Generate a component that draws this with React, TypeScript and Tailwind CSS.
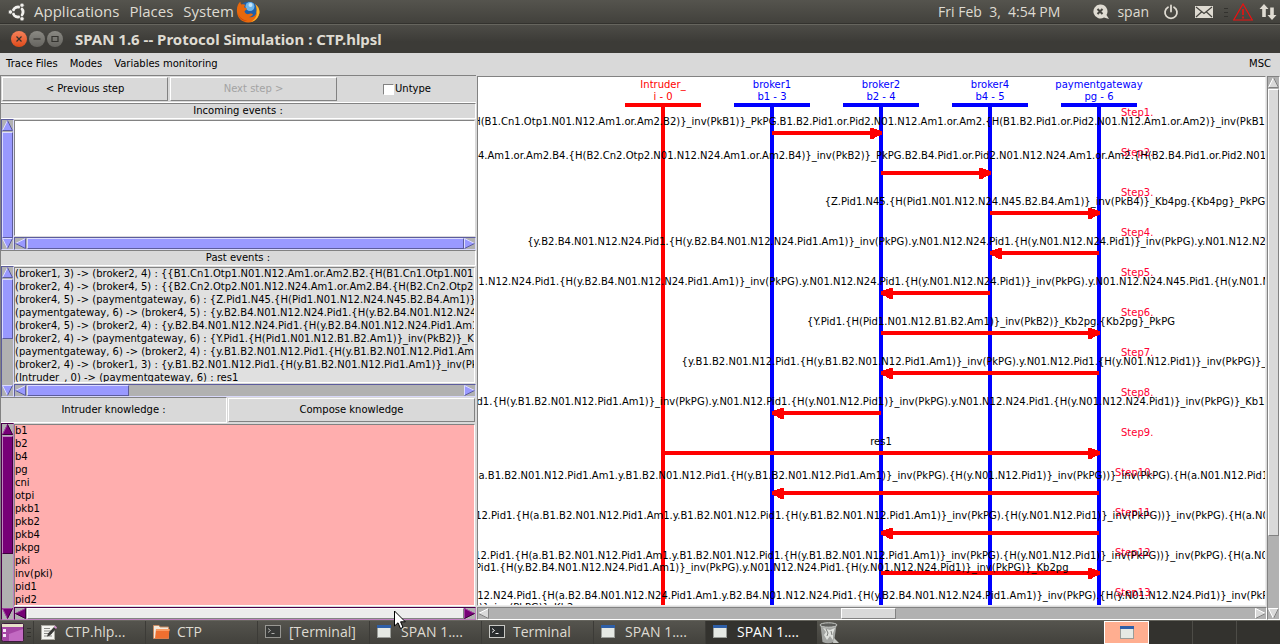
import type { ReactNode } from "react";

/* ---------- scrollbars and frames ---------- */

type Tone = {
  frame: string;
  thumb: string;
  fill: string;
  light: string;
  dark: string;
};

const violet: Tone = {
  frame: "border-t-[#5c5c9c] border-l-[#5c5c9c] border-b-[#d8d8fa] border-r-[#d8d8fa]",
  thumb: "bg-[#9999ff] border-t-[#dcdcff] border-l-[#dcdcff] border-b-[#5c5c9c] border-r-[#5c5c9c]",
  fill: "#9999ff",
  light: "#dcdcff",
  dark: "#5c5c9c",
};

const purple: Tone = {
  frame: "border-t-[#4a004a] border-l-[#4a004a] border-b-[#c080c0] border-r-[#c080c0]",
  thumb: "bg-[#770077] border-t-[#c080c0] border-l-[#c080c0] border-b-[#3c003c] border-r-[#3c003c]",
  fill: "#770077",
  light: "#a040a0",
  dark: "#3c003c",
};

const purpleIdle: Tone = {
  ...purple,
  thumb: "bg-[#ececec] border-t-white border-l-white border-b-[#828282] border-r-[#828282]",
};

const grey: Tone = {
  frame: "border-t-[#828282] border-l-[#828282] border-b-white border-r-white",
  thumb: "bg-[#d9d9d9] border-t-white border-l-white border-b-[#828282] border-r-[#828282]",
  fill: "#d9d9d9",
  light: "#ffffff",
  dark: "#828282",
};

type Dir = "up" | "down" | "left" | "right";

const shapes: Record<Dir, { body: string; light: string; dark: string }> = {
  up: { body: "5.5,0 11,11 0,11", light: "M0.5 10.5L5.5 0.5", dark: "M5.5 0.5L10.5 10.5H0.5" },
  down: { body: "0,0 11,0 5.5,11", light: "M10.5 0.5H0.5L5.5 10.5", dark: "M5.5 10.5L10.5 0.5" },
  left: { body: "0,5.5 11,0 11,11", light: "M0.5 5.5L10.5 0.5", dark: "M10.5 0.5V10.5L0.5 5.5" },
  right: { body: "11,5.5 0,0 0,11", light: "M10.5 5.5L0.5 0.5V10.5", dark: "M0.5 10.5L10.5 5.5" },
};

function Arrow({ dir, tone }: { dir: Dir; tone: Tone }) {
  const s = shapes[dir];
  return (
    <button type="button" aria-label={"Scroll " + dir} className="size-[11px] shrink-0">
      <svg viewBox="0 0 11 11" className="block size-[11px]">
        <polygon points={s.body} fill={tone.fill} />
        <path d={s.light} fill="none" stroke={tone.light} />
        <path d={s.dark} fill="none" stroke={tone.dark} />
      </svg>
    </button>
  );
}

function Scrollbar({ vertical = false, tone, before, size }: { vertical?: boolean; tone: Tone; before: number; size: number }) {
  return (
    <div
      className={
        "flex shrink-0 border bg-[#b1b1b1] " +
        (vertical ? "w-[13px] flex-col " : "h-[13px] ") +
        tone.frame
      }
    >
      <Arrow dir={vertical ? "up" : "left"} tone={tone} />
      <div className={"flex min-h-0 min-w-0 flex-1 " + (vertical ? "flex-col pt-px" : "pl-px")}>
        <div style={{ flexGrow: before, flexBasis: 0 }} />
        <div className={"border " + tone.thumb} style={{ flexGrow: size, flexBasis: 0 }} />
        <div style={{ flexGrow: 100 - before - size, flexBasis: 0 }} />
      </div>
      <Arrow dir={vertical ? "down" : "right"} tone={tone} />
    </div>
  );
}

function ScrollFrame({
  tone,
  xTone,
  v,
  h,
  className,
  paper,
  children,
}: {
  tone: Tone;
  xTone?: Tone;
  v: [number, number];
  h: [number, number];
  className: string;
  paper: string;
  children?: ReactNode;
}) {
  return (
    <div className={"flex min-h-0 " + className}>
      <Scrollbar vertical tone={tone} before={v[0]} size={v[1]} />
      <div className="flex min-w-0 flex-1 flex-col">
        <div
          className={
            "mb-px mt-px mr-px min-h-0 flex-1 overflow-hidden border border-t-[#828282] border-l-[#828282] border-b-white border-r-white whitespace-nowrap leading-[13px] " +
            paper
          }
        >
          <div className="-mt-px">{children}</div>
        </div>
        <Scrollbar tone={xTone ?? tone} before={h[0]} size={h[1]} />
      </div>
    </div>
  );
}

const raised = "border border-t-white border-l-white border-b-[#828282] border-r-[#828282]";
const sunken = "border-y border-r border-t-[#828282] border-b-white border-r-white";

/* ---------- data ---------- */

const pastEvents = [
  "(broker1, 3) -> (broker2, 4) : {{B1.Cn1.Otp1.N01.N12.Am1.or.Am2.B2.{H(B1.Cn1.Otp1.N01.N12.",
  "(broker2, 4) -> (broker4, 5) : {{B2.Cn2.Otp2.N01.N12.N24.Am1.or.Am2.B4.{H(B2.Cn2.Otp2.N01.",
  "(broker4, 5) -> (paymentgateway, 6) : {Z.Pid1.N45.{H(Pid1.N01.N12.N24.N45.B2.B4.Am1)}_inv",
  "(paymentgateway, 6) -> (broker4, 5) : {y.B2.B4.N01.N12.N24.Pid1.{H(y.B2.B4.N01.N12.N24.Pid1",
  "(broker4, 5) -> (broker2, 4) : {y.B2.B4.N01.N12.N24.Pid1.{H(y.B2.B4.N01.N12.N24.Pid1.Am1)}_i",
  "(broker2, 4) -> (paymentgateway, 6) : {Y.Pid1.{H(Pid1.N01.N12.B1.B2.Am1)}_inv(PkB2)}_Kb2pg",
  "(paymentgateway, 6) -> (broker2, 4) : {y.B1.B2.N01.N12.Pid1.{H(y.B1.B2.N01.N12.Pid1.Am1)}_",
  "(broker2, 4) -> (broker1, 3) : {y.B1.B2.N01.N12.Pid1.{H(y.B1.B2.N01.N12.Pid1.Am1)}_inv(PkPG)",
  "(Intruder_, 0) -> (paymentgateway, 6) : res1",
];

const knowledge = ["b1", "b2", "b4", "pg", "cni", "otpi", "pkb1", "pkb2", "pkb4", "pkpg", "pki", "inv(pki)", "pid1", "pid2"];

const actors = [
  { name: "Intruder_", id: "i - 0", x: 185, intruder: true },
  { name: "broker1", id: "b1 - 3", x: 294 },
  { name: "broker2", id: "b2 - 4", x: 403 },
  { name: "broker4", id: "b4 - 5", x: 512 },
  { name: "paymentgateway", id: "pg - 6", x: 621 },
];

/* from and to are indexes into actors */
const messages = [
  { from: 1, to: 2 },
  { from: 2, to: 3 },
  { from: 3, to: 4 },
  { from: 4, to: 3 },
  { from: 3, to: 2 },
  { from: 2, to: 4 },
  { from: 4, to: 2 },
  { from: 2, to: 1 },
  { from: 0, to: 4 },
  { from: 4, to: 1 },
  { from: 4, to: 2 },
  { from: 2, to: 4 },
];

/* x is the middle of each label */
const labels = [
  { x: 394, y: 39, text: "2.{H(B1.Cn1.Otp1.N01.N12.Am1.or.Am2.B2)}_inv(PkB1)}_PkPG.B1.B2.Pid1.or.Pid2.N01.N12.Am1.or.Am2.{H(B1.B2.Pid1.or.Pid2.N01.N12.Am1.or.Am2)}_inv(PkB1)}_K" },
  { x: 394, y: 73, text: "2.N24.Am1.or.Am2.B4.{H(B2.Cn2.Otp2.N01.N12.N24.Am1.or.Am2.B4)}_inv(PkB2)}_PkPG.B2.B4.Pid1.or.Pid2.N01.N12.N24.Am1.or.Am2.{H(B2.B4.Pid1.or.Pid2.N01.N12" },
  { x: 567, y: 119, text: "{Z.Pid1.N45.{H(Pid1.N01.N12.N24.N45.B2.B4.Am1)}_inv(PkB4)}_Kb4pg.{Kb4pg}_PkPG" },
  { x: 427, y: 159, text: "{y.B2.B4.N01.N12.N24.Pid1.{H(y.B2.B4.N01.N12.N24.Pid1.Am1)}_inv(PkPG).y.N01.N12.N24.Pid1.{H(y.N01.N12.N24.Pid1)}_inv(PkPG).y.N01.N12.N24.N" },
  { x: 394, y: 199, text: ".N01.N12.N24.Pid1.{H(y.B2.B4.N01.N12.N24.Pid1.Am1)}_inv(PkPG).y.N01.N12.N24.Pid1.{H(y.N01.N12.N24.Pid1)}_inv(PkPG).y.N01.N12.N24.N45.Pid1.{H(y.N01.N12" },
  { x: 513, y: 239, text: "{Y.Pid1.{H(Pid1.N01.N12.B1.B2.Am1)}_inv(PkB2)}_Kb2pg.{Kb2pg}_PkPG" },
  { x: 512, y: 279, text: "{y.B1.B2.N01.N12.Pid1.{H(y.B1.B2.N01.N12.Pid1.Am1)}_inv(PkPG).y.N01.N12.Pid1.{H(y.N01.N12.Pid1)}_inv(PkPG)}_Kb2pg" },
  { x: 393, y: 319, text: ".Pid1.{H(y.B1.B2.N01.N12.Pid1.Am1)}_inv(PkPG).y.N01.N12.Pid1.{H(y.N01.N12.Pid1)}_inv(PkPG).y.N01.N12.N24.Pid1.{H(y.N01.N12.N24.Pid1)}_inv(PkPG)}_Kb1b2" },
  { x: 403, y: 359, text: "res1" },
  { x: 395, y: 393, text: "{H(a.B1.B2.N01.N12.Pid1.Am1.y.B1.B2.N01.N12.Pid1.{H(y.B1.B2.N01.N12.Pid1.Am1)}_inv(PkPG).{H(y.N01.N12.Pid1)}_inv(PkPG))}_inv(PkPG).{H(a.N01.N12.Pid1.{H" },
  { x: 394, y: 433, text: "1.N12.Pid1.{H(a.B1.B2.N01.N12.Pid1.Am1.y.B1.B2.N01.N12.Pid1.{H(y.B1.B2.N01.N12.Pid1.Am1)}_inv(PkPG).{H(y.N01.N12.Pid1)}_inv(PkPG))}_inv(PkPG).{H(a.N01.N" },
  { x: 393, y: 473, text: "1.N12.Pid1.{H(a.B1.B2.N01.N12.Pid1.Am1.y.B1.B2.N01.N12.Pid1.{H(y.B1.B2.N01.N12.Pid1.Am1)}_inv(PkPG).{H(y.N01.N12.Pid1)}_inv(PkPG))}_inv(PkPG).{H(a.N01.N" },
  { x: 289, y: 485, text: "4.Pid1.{H(y.B2.B4.N01.N12.N24.Pid1.Am1)}_inv(PkPG).y.N01.N12.N24.Pid1.{H(y.N01.N12.N24.Pid1)}_inv(PkPG)}_Kb2pg" },
  { x: 394, y: 513, text: "1.N12.N24.Pid1.{H(a.B2.B4.N01.N12.N24.Pid1.Am1.y.B2.B4.N01.N12.N24.Pid1.{H(y.B2.B4.N01.N12.N24.Pid1.Am1)}_inv(PkPG).{H(y.N01.N12.N24.Pid1)}_inv(PkPG))" },
  { x: 45, y: 525, text: "4)}_inv(PkPG)}_Kb2" },
];

/* ---------- sequence chart ---------- */

function Chart() {
  return (
    <div className="relative h-full overflow-hidden whitespace-nowrap leading-3">
      <svg width="786" height="800" className="absolute left-0 top-0" shapeRendering="crispEdges">
        {actors.map((a) => (
          <g key={a.id} fill={a.intruder ? "#ff0000" : "#0000ff"}>
            <rect x={a.x - 38} y="26" width="76" height="4" />
            <rect x={a.x - 2} y="26" width="4" height="774" />
          </g>
        ))}
        {messages.map((m, i) => {
          const a = actors[m.from].x;
          const b = actors[m.to].x;
          const y = 56 + i * 40;
          const d = b > a ? 1 : -1;
          const tip = b > a ? b + 1 : b;
          return (
            <g key={i} fill="#ff0000">
              <rect x={Math.min(a, b)} y={y - 2} width={Math.abs(b - a)} height="4" />
              <path
                d={`M${tip} ${y - 2}V${y + 2}L${tip - 4 * d} ${y + 3}L${tip - 9 * d} ${y + 6}H${tip - 12 * d}V${y - 5}H${tip - 9 * d}L${tip - 4 * d} ${y - 3}Z`}
              />
            </g>
          );
        })}
      </svg>
      {actors.map((a) => (
        <div
          key={a.id}
          className={
            "absolute top-[2px] w-[100px] -translate-x-1/2 text-center " + (a.intruder ? "text-[#ff0000]" : "text-[#0000ff]")
          }
          style={{ left: a.x }}
        >
          {a.name}
          <br />
          {a.id}
        </div>
      ))}
      {Array.from({ length: 13 }, (_, i) => (
        <span key={i} className="absolute text-[#ff0033]" style={{ left: i < 9 ? 643 : 637, top: 30 + i * 40 }}>
          {`Step${i + 1}.`}
        </span>
      ))}
      {labels.map((l) => (
        <div key={l.y} className="absolute flex w-0 justify-center text-black" style={{ left: l.x, top: l.y }}>
          <span>{l.text}</span>
        </div>
      ))}
    </div>
  );
}

/* ---------- desktop icons ---------- */

function UbuntuLogo() {
  return (
    <svg viewBox="0 0 18 20" className="h-5 w-[18px]">
      <circle cx="10" cy="10" r="5" fill="none" stroke="#f2f1ee" strokeWidth="3" />
      <g stroke="#4b4a45" strokeWidth="1.4">
        <path d="M10 10L2 10M10 10L14.5 2.5M10 10L14.5 17.5" />
      </g>
      <circle cx="10" cy="10" r="3.2" fill="#4b4a45" />
      <g fill="#f2f1ee" stroke="#4b4a45" strokeWidth="0.8">
        <circle cx="2.4" cy="10" r="2.2" />
        <circle cx="14" cy="3.2" r="2.2" />
        <circle cx="14" cy="16.8" r="2.2" />
      </g>
    </svg>
  );
}

function Firefox() {
  return (
    <svg viewBox="0 0 24 24" className="size-6">
      <circle cx="12.5" cy="11" r="9.5" fill="#1f5fa8" />
      <circle cx="14" cy="6.5" r="4.5" fill="#6db5ea" />
      <circle cx="14.5" cy="5" r="2" fill="#c5e6fa" />
      <path
        d="M1 12C0.500 7 2 3.500 4.500 1.500C4.300 3 4.800 4 5.500 4.500C7 4 8.500 4.300 9.500 5C8.500 5.500 8 6.500 8.500 7.500L11 8.500C10.500 10 9 10.300 8.500 11.500C9 13.500 11 14.500 13 14C15 13.300 16.500 13.500 17 14.500C16 16 14.500 17 13 17C17 18 20 15.500 20.500 12C21 9 20.500 6 19 4C22.500 6.500 24 10 23.300 13.500C22.300 19 17.500 22.800 12 22.500C6 22.300 1.500 18 1 12Z"
        fill="#e8680c"
      />
      <path d="M20.500 12C21 9 20.500 6 19 4C22.500 6.500 24 10 23.300 13.500C22.300 18 19 21 15 22C19 19.500 21.500 16 20.500 12Z" fill="#fbb52c" />
      <path d="M2 13C3 17 6 20 11 20.500C7 21.500 3 18.500 2 13Z" fill="#c43d08" />
    </svg>
  );
}

function Tray() {
  return (
    <div className="flex items-center">
      <svg viewBox="0 0 18 18" className="size-[18px]">
        <path d="M8 1.500A7 7 0 1 0 12 14.500L17 16L14.500 12A7 7 0 0 0 8 1.500Z" fill="#dfdbd2" />
        <path d="M5.500 6L10.500 11M10.500 6L5.500 11" stroke="#45443f" strokeWidth="2" />
      </svg>
      <span className="ml-[7px]">span</span>
      <svg viewBox="0 0 16 16" className="ml-[14px] size-4" fill="none" stroke="#dfdbd2" strokeWidth="1.8" strokeLinecap="round">
        <path d="M5 3.200A6 6 0 1 0 11 3.200M8 1.500V7.500" />
      </svg>
      <svg viewBox="0 0 18 12" className="ml-4 h-3 w-[18px]">
        <rect width="18" height="12" fill="#dfdbd2" />
        <path d="M1 1L9 7.500L17 1M1 11L6.500 6M17 11L11.500 6" fill="none" stroke="#45443f" strokeWidth="1.200" />
      </svg>
      <svg viewBox="0 0 4 10" className="ml-[11px] h-[10px] w-1" fill="#33322e">
        <path d="M0 1h4v1H0zM0 5h4v1H0zM0 9h4v1H0z" />
      </svg>
      <svg viewBox="0 0 20 18" className="ml-[5px] h-[18px] w-5" fill="none" stroke="#ee1010">
        <path d="M10 1L19.300 17H0.700Z" strokeWidth="1.200" />
        <path d="M10 6V12M10 13.500V15.500" strokeWidth="1.600" />
      </svg>
      <svg viewBox="0 0 18 18" className="ml-[6px] size-[18px]" fill="#dfdbd2">
        <path d="M5 1L9.500 6H6.800V14H3.200V6H0.500ZM13 17L8.500 12H11.200V4.500H14.800V12H17.500Z" />
      </svg>
    </div>
  );
}

function WindowIcon() {
  return (
    <svg viewBox="0 0 14 13" className="h-[13px] w-[14px] shrink-0">
      <rect x="0.500" y="0.500" width="13" height="12" fill="#e6e9e4" stroke="#9a9c98" />
      <rect width="14" height="3" fill="#2e5fa8" />
    </svg>
  );
}

function TerminalIcon({ dim = false }: { dim?: boolean }) {
  return (
    <svg viewBox="0 0 16 13" className={"h-[13px] w-4 shrink-0 " + (dim ? "opacity-60" : "")}>
      <rect x="0.500" y="0.500" width="15" height="12" fill="#2b2e2f" stroke="#c9c9c5" />
      <path d="M3 3.500L5.500 5.500L3 7.500M6.500 8.500H9.500" fill="none" stroke="#f0f0f0" />
    </svg>
  );
}

function EditorIcon() {
  return (
    <svg viewBox="0 0 16 16" className="size-4 shrink-0">
      <rect x="0.500" y="1.500" width="13" height="14" fill="#f4f4f0" stroke="#aaa9a2" />
      <path d="M3 4.500H9M3 7H11M3 9.500H11M3 12H11" stroke="#8a8a86" />
      <path d="M6 12.500L7 9.500L13 3L15 5L9 11.500Z" fill="#3a3a38" />
      <path d="M13 3L14 1.500L16 3.500L15 5Z" fill="#d690cf" />
    </svg>
  );
}

function FolderIcon() {
  return (
    <svg viewBox="0 0 17 14" className="h-[14px] w-[17px] shrink-0">
      <path d="M0.500 0.500H6L7 2H15.500V13.500H0.500Z" fill="#f3e8dc" stroke="#c98a63" />
      <path d="M3 4H16.500L15.500 13.500H2Z" fill="#ef6f30" />
      <path d="M3 4H16.500V6H3Z" fill="#f99a63" />
    </svg>
  );
}

function TrashIcon() {
  return (
    <svg viewBox="0 0 22 22" className="size-[22px]">
      <path d="M1.500 3L3.500 20Q9 22.500 15 20L17.500 3Z" fill="#a3a5a2" />
      <path d="M4 6L7 10L5 13L8 18L11 14L14 18L14 11L16 6L11 8Z" fill="#dfe1dd" />
      <path d="M7 7L9 11L8 14M12 9L13 13" fill="none" stroke="#7b7d7a" />
      <ellipse cx="9.500" cy="3" rx="8.500" ry="2.200" fill="#5c5d5a" stroke="#c6c8c4" />
      <path d="M15 16L20 21L14 21Z" fill="#c4c6c2" />
    </svg>
  );
}

const tasks: { icon: ReactNode; title: string; active?: boolean }[] = [
  { icon: <EditorIcon />, title: "CTP.hlp..." },
  { icon: <FolderIcon />, title: "CTP" },
  { icon: <TerminalIcon dim />, title: "[Terminal]" },
  { icon: <WindowIcon />, title: "SPAN 1...." },
  { icon: <TerminalIcon />, title: "Terminal" },
  { icon: <WindowIcon />, title: "SPAN 1...." },
  { icon: <WindowIcon />, title: "SPAN 1....", active: true },
];

function WindowButton({ kind }: { kind: "close" | "min" | "max" }) {
  return (
    <button
      type="button"
      aria-label={kind}
      className={
        "size-4 rounded-full " +
        (kind === "close" ? "bg-linear-to-b from-[#f58159] to-[#df4a16]" : "bg-linear-to-b from-[#8b8a84] to-[#65645f]")
      }
    >
      <svg viewBox="0 0 16 16" className="block size-4" fill="none" stroke="#33322e" strokeWidth="1.200">
        {kind === "close" && <path d="M5.500 5.500L10.500 10.500M10.500 5.500L5.500 10.500" />}
        {kind === "min" && <path d="M4.500 8H11.500" />}
        {kind === "max" && <path d="M5 5.500H11V10.500H5Z" />}
      </svg>
    </button>
  );
}

export default function App() {
  return (
    <div className="relative flex h-screen flex-col overflow-hidden bg-[#d9d9d9] font-['DejaVu_Sans',sans-serif] text-[10px] leading-3 text-black">
      <header className="flex h-6 shrink-0 items-center justify-between border-b border-[#33322e] bg-linear-to-b from-[#55544e] to-[#42413c] pl-2 pr-[3px] font-['Open_Sans',sans-serif] text-sm text-[#dfdbd2]">
        <nav className="flex items-center text-[15px]">
          <UbuntuLogo />
          <button type="button" className="ml-2">Applications</button>
          <button type="button" className="ml-[10px]">Places</button>
          <button type="button" className="ml-[10px]">System</button>
          <span className="ml-[2px]">
            <Firefox />
          </span>
        </nav>
        <div className="flex items-center gap-8">
          <span className="whitespace-pre">Fri Feb  3,  4:54 PM</span>
          <Tray />
        </div>
      </header>

      <div className="flex h-[29px] shrink-0 items-center border-t border-[#66655e] bg-linear-to-b from-[#4d4c47] to-[#3c3b37] to-60% pl-[11px] font-['Noto_Sans',sans-serif] text-[15px] font-bold text-[#dfdbd2]">
        <div className="flex gap-[2px]">
          <WindowButton kind="close" />
          <WindowButton kind="min" />
          <WindowButton kind="max" />
        </div>
        <h1 className="ml-3">SPAN 1.6 -- Protocol Simulation : CTP.hlpsl</h1>
      </div>

      <nav className="flex h-[22px] shrink-0 items-center gap-3 pl-[6px] pr-[9px]">
        <button type="button">Trace Files</button>
        <button type="button">Modes</button>
        <button type="button">Variables monitoring</button>
        <button type="button" className="ml-auto">MSC</button>
      </nav>

      <main className="flex min-h-0 flex-1">
        <section className="flex w-[476px] shrink-0 flex-col border-l border-[#828282]">
          <div className="flex h-7 shrink-0 items-stretch gap-[2px] border-y border-t-[#828282] border-b-white p-px">
            <button type="button" className={"w-[166px] " + raised}>&lt; Previous step</button>
            <button type="button" disabled className={"w-[167px] text-[#a3a3a3] " + raised}>Next step &gt;</button>
            <label className="flex flex-1 items-center justify-center gap-px">
              <input
                type="checkbox"
                className="size-[11px] appearance-none border border-t-[#828282] border-l-[#828282] border-b-white border-r-white bg-white"
              />
              Untype
            </label>
          </div>
          <div className={"flex h-4 shrink-0 items-center justify-center " + sunken}>Incoming events :</div>
          <ScrollFrame tone={violet} v={[0, 100]} h={[0, 100]} className="h-[131px] shrink-0" paper="bg-white" />
          <div className={"flex h-4 shrink-0 items-center justify-center " + sunken}>Past events :</div>
          <ScrollFrame tone={violet} v={[0, 56]} h={[0, 23]} className="h-[131px] shrink-0" paper="bg-[#e0e0e0]">
            {pastEvents.map((e) => (
              <div key={e}>{e}</div>
            ))}
          </ScrollFrame>
          <div className="flex h-[26px] shrink-0 items-stretch">
            <div className={"flex w-[226px] items-center justify-center " + sunken}>Intruder knowledge :</div>
            <button type="button" className={"m-px flex-1 " + raised}>Compose knowledge</button>
          </div>
          <ScrollFrame tone={purple} xTone={purpleIdle} v={[0, 68]} h={[0, 100]} className="flex-1" paper="bg-[#ffaeae]">
            {knowledge.map((k) => (
              <div key={k}>{k}</div>
            ))}
          </ScrollFrame>
        </section>

        <section className="ml-px flex min-w-0 flex-1 pt-px">
          <div className="flex min-w-0 flex-1 flex-col">
            <div className="mb-px mr-px min-h-0 flex-1 border border-t-[#828282] border-l-[#828282] border-b-[#ececec] border-r-[#ececec] bg-white">
              <Chart />
            </div>
            <Scrollbar tone={grey} before={46} size={7} />
          </div>
          <Scrollbar vertical tone={grey} before={0} size={86} />
        </section>
      </main>

      <footer className="flex h-6 shrink-0 items-stretch border-t border-[#66655e] bg-linear-to-b from-[#55544e] to-[#42413c] font-['Open_Sans',sans-serif] text-sm leading-5 text-[#dfdbd2]">
        <button type="button" aria-label="Show desktop" className="w-6 pl-px">
          <svg viewBox="0 0 23 21" className="block h-[21px] w-[23px]">
            <rect x="0.500" y="1.500" width="22" height="18" rx="2" fill="#a546a5" stroke="#3b1c3b" />
            <path d="M1 2H22V5H1Z" fill="#e6e0c8" />
            <path d="M2 7h3v3H2zM2 12h3v3H2z" fill="#f6e6f6" />
            <path d="M8 12L22 7V19H8Z" fill="#c26ac2" />
          </svg>
        </button>
        <svg viewBox="0 0 4 12" className="ml-[3px] mr-[2px] h-3 w-1 self-center" fill="#33322e">
          <path d="M0 1h4v1H0zM0 5h4v1H0zM0 9h4v1H0z" />
        </svg>
        {tasks.map((t, i) => (
          <button
            key={i}
            type="button"
            className={
              "flex w-28 items-center gap-2 border-l border-l-[#3c3b37] pb-[2px] pl-[7px] text-left whitespace-nowrap " +
              (t.active ? "bg-[#33322e] text-white" : "")
            }
          >
            <span className="flex w-4 shrink-0">{t.icon}</span>
            <span>{t.title}</span>
          </button>
        ))}
        <button type="button" aria-label="Trash" className="ml-[2px]">
          <TrashIcon />
        </button>
        <div className="ml-auto flex w-44 bg-[#33322e]">
          <div className="flex flex-1 items-center justify-center border border-white bg-[#ffae90]">
            <WindowIcon />
          </div>
          <div className="flex-1 border-r border-[#4d4c47]" />
          <div className="flex-1 border-r border-[#4d4c47]" />
          <div className="flex-1" />
        </div>
      </footer>

      <svg viewBox="0 0 14 20" className="pointer-events-none absolute left-[393px] top-[610px] h-5 w-[14px]">
        <path d="M1.500 1V16L5 12.800L7.500 18.500L10 17.400L7.600 11.800H12.300Z" fill="#ffffff" stroke="#000000" />
      </svg>
    </div>
  );
}
